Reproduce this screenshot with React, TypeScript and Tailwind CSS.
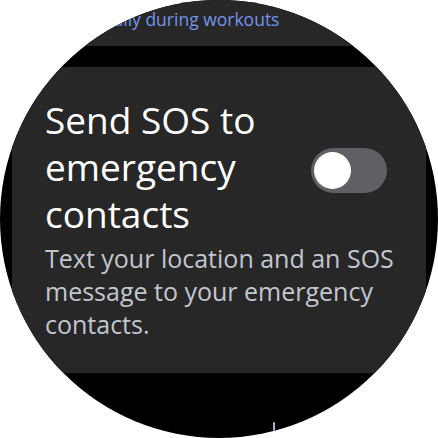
import React from 'react';

function Toggle({ on }: { on: boolean }) {
  return (
    <div
      className={`mr-[19px] mt-[8px] flex h-[45px] w-[76px] shrink-0 items-center rounded-full px-[3px] ${
        on ? 'justify-end bg-[#a8c7fa]' : 'justify-start bg-[#5f5f64]'
      }`}
    >
      <div className="h-[37px] w-[37px] rounded-full bg-white" />
    </div>
  );
}

export default function App() {
  return (
    <div className="h-[438px] w-[438px] bg-white" style={{ fontFamily: '"Open Sans", Roboto, sans-serif' }}>
      <div className="relative h-[438px] w-[438px] overflow-hidden rounded-full bg-black">
        <div className="flex flex-col gap-[21px] px-[12px]">
          {/* previous item, scrolled mostly out of view */}
          <div className="h-[46px] rounded-b-[28px] bg-[#272727] pl-[18px] pt-[5px]">
            <p className="whitespace-nowrap text-[17.5px] leading-[28px] text-[#7493ea]">Automatically during workouts</p>
          </div>

          {/* SOS item */}
          <div className="flex h-[306px] flex-col rounded-[28px] bg-[#272727] pl-[33px] pr-[20px] pt-[29px]">
            <div className="flex items-center justify-between">
              <h2 className="text-[37px] leading-[47px] text-white">
                Send SOS to
                <br />
                emergency
                <br />
                contacts
              </h2>
              <Toggle on={false} />
            </div>
            <p className="mt-[5px] text-[25px] leading-[33px] text-[#c3c6cf]">
              Text your location and an SOS message to your emergency contacts.
            </p>
          </div>
        </div>

        {/* scroll indicator */}
        <div className="absolute left-[273px] top-[422px] h-[9px] w-[2px] rounded-full bg-[#a9b4cf]" />
      </div>
    </div>
  );
}
